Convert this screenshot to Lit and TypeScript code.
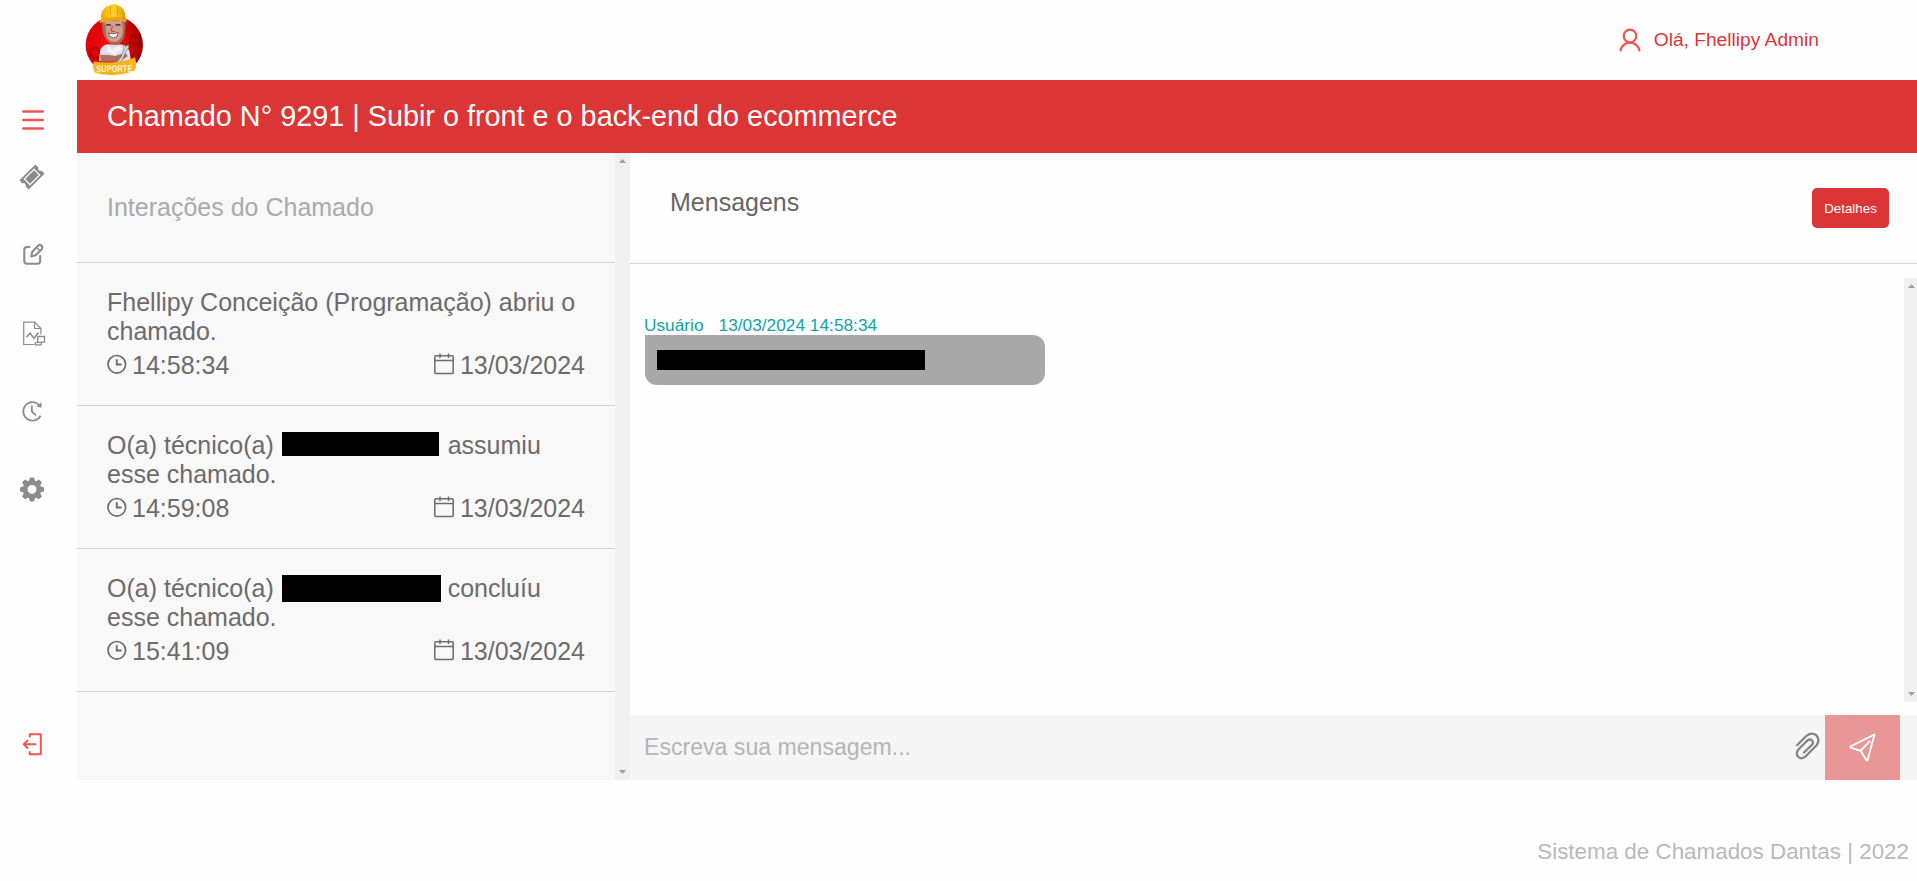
import { LitElement, html, css, svg, nothing } from "lit";
import { customElement, property } from "lit/decorators.js";

interface Interaction {
  first: string;
  hidden?: "a" | "b";
  after?: string;
  second: string;
  time: string;
  date: string;
}

const interactions: Interaction[] = [
  { first: "Fhellipy Conceição (Programação) abriu o", second: "chamado.", time: "14:58:34", date: "13/03/2024" },
  { first: "O(a) técnico(a)", hidden: "a", after: "assumiu", second: "esse chamado.", time: "14:59:08", date: "13/03/2024" },
  { first: "O(a) técnico(a)", hidden: "b", after: "concluíu", second: "esse chamado.", time: "15:41:09", date: "13/03/2024" },
];

const icons = {
  menu: svg`<path d="M29.3 28.5h19.500M29.300 37h19.500M29.300 45.500h19.500" stroke="#f2554f" stroke-width="2.500" stroke-linecap="round"/>`,
  ticket: svg`<g transform="translate(38 39) rotate(-45)" fill="#8c8c8c">
      <path fill-rule="evenodd" d="M-10.500-6.500H10.500q.8 0 .8.800V-2.200a2.300 2.300 0 0 0 0 4.400V5.700q0 .8-.8.800H-10.500q-.8 0-.8-.8V2.200a2.300 2.300 0 0 0 0-4.400V-5.700q0-.8.8-.8ZM-7.500-4.600V4.600H7.500V-4.600Z"/>
      <rect x="-6.200" y="-3.400" width="12.400" height="6.800"/></g>`,
  edit: svg`<g fill="none" stroke="#8c8c8c" stroke-width="2.100" stroke-linecap="round" stroke-linejoin="round">
      <path d="M29.500 31h-2.500q-2.700 0-2.700 2.700v11.300q0 2.700 2.700 2.700h10.500q2.700 0 2.700-2.700v-5"/>
      <path d="M31.300 40.500l.8-4.500 6-6.300q1.900-1.600 3.500 0t0 3.500l-6 6Z"/><path d="M37 32l3 2.800" stroke-width="1.500"/></g>`,
  report: svg`<g fill="none" stroke="#8c8c8c" stroke-width="1.200">
      <path d="M34.500 50.500h-10.800v-22.300h11l6.200 6.300v6M34.600 28.500v6h6"/>
      <path d="M26.500 43.200l3.500-4 4 5 4.500-5.700" stroke-width="1.500"/>
      <path d="M37.700 48.300v-5.800h6.800v5.600h-3l-.5 2.700h-5.500q-.8-2.500 1.200-2.500h4.800" stroke-width="1.300"/></g>`,
  history: svg`<g fill="none" stroke="#8c8c8c" stroke-width="1.800">
      <path d="M39 32.800a9.200 9.200 0 1 0 1.600 10.900"/><path d="M31.900 33.500v6.200l4 3.700"/></g>
      <path d="M41.500 30.300v5.500l-5-1.200Z" fill="#8c8c8c"/>`,
  logout: svg`<g fill="none" stroke="#f2554f" stroke-width="2" stroke-linecap="round" stroke-linejoin="round">
      <path d="M29.800 12.500v-2.300h11v20h-11v-2.200M35.500 20.300h-11.500M27.500 16.600l-3.700 3.700 3.700 3.700"/></g>`,
};

const gear = (() => {
  const cells = [];
  for (let i = 0; i < 8; i++) {
    cells.push(svg`<path d="M-3.200 -8L-2 -12H2L3.200 -8Z" transform=${`rotate(${i * 45})`}/>`);
  }
  return svg`<g transform="translate(32 39.400)" fill="#8c8c8c">${cells}
    <path fill-rule="evenodd" d="M0-9.200a9.200 9.200 0 1 1 0 18.400a9.200 9.200 0 1 1 0-18.400M0-4.500a4.500 4.500 0 1 0 0 9a4.500 4.500 0 1 0 0-9"/></g>`;
})();

@customElement("side-nav")
export class SideNav extends LitElement {
  static styles = css`
    :host { display: flex; flex-direction: column; width: 77px; height: 781px; box-sizing: border-box; padding-top: 83px; flex: none; }
    svg { display: block; flex: none; }
    .spacer { flex: 1; }
  `;
  render() {
    return html`
      <svg width="77" height="55" viewBox="6 0 77 55">${icons.menu}</svg>
      <svg width="77" height="78" viewBox="6 0 77 78">${icons.ticket}</svg>
      <svg width="77" height="78" viewBox="0 0 77 78">${icons.edit}</svg>
      <svg width="77" height="78" viewBox="0 0 77 78">${icons.report}</svg>
      <svg width="77" height="78" viewBox="0 0 77 78">${icons.history}</svg>
      <svg width="77" height="78" viewBox="0 0 77 78">${gear}</svg>
      <div class="spacer"></div>
      <svg width="77" height="57" viewBox="0 0 77 57">${icons.logout}</svg>
    `;
  }
}

@customElement("scroll-track")
export class ScrollTrack extends LitElement {
  static styles = css`
    :host { display: flex; flex-direction: column; justify-content: space-between; align-items: center; background: #f0f0f0; box-sizing: border-box; padding: 6px 0; flex: none; }
    .up, .down { width: 7px; height: 4px; background: #a0a0a0; }
    .up { clip-path: polygon(50% 0, 100% 100%, 0 100%); }
    .down { clip-path: polygon(0 0, 100% 0, 50% 100%); }
  `;
  render() {
    return html`<div class="up"></div><div class="down"></div>`;
  }
}

@customElement("support-logo")
export class SupportLogo extends LitElement {
  static styles = css`
    :host, svg { display: block; }
    .label { font: bold 9.500px "Liberation Sans", Arial, sans-serif; }
  `;
  render() {
    return html`<svg width="62" height="76" viewBox="83 0 62 76">
      <defs><radialGradient id="disc" cx=".35" cy=".45" r=".7">
        <stop offset="0" stop-color="#f30b0b"/><stop offset=".6" stop-color="#d40606"/><stop offset="1" stop-color="#8e0303"/>
      </radialGradient>
      <linearGradient id="hat"><stop offset="0" stop-color="#f0a80c"/><stop offset=".5" stop-color="#ffd22a"/><stop offset="1" stop-color="#d99a08"/></linearGradient></defs>
      <circle cx="114.300" cy="45" r="28.700" fill="url(#disc)"/>
      <circle cx="95" cy="53" r="5" fill="none" stroke="#b00505" stroke-width="3" stroke-dasharray="2.500 1.300"/>
      <circle cx="135" cy="40" r="5" fill="none" stroke="#9a0303" stroke-width="3" stroke-dasharray="2.500 1.300"/>
      <path d="M99 61l1-10q1-5 6-6.500h16q6 2 7.500 7l1.500 10Z" fill="#dfe0ec"/>
      <path d="M108 44l4 6 7-5 3 4-8 6-7-4Z" fill="#f4f4fb"/>
      <path d="M101.500 19h24q.5 9-.8 15.500-1.500 9-8.700 10.500-8.500-.5-11.700-8.200-2.300-5-2.800-17.800Z" fill="#a3695b"/>
      <path d="M104.500 21h17q2.500 8 .5 15-3 6-8 6t-7.500-6Z" fill="#d39c8b"/>
      <path d="M106 25.500q2.500-1.800 5 0M115.500 25.500q2.500-1.800 5 0" stroke="#3a2520" stroke-width="1.300" fill="none"/>
      <path d="M112.500 26l-1.500 5q2 1.200 4 0" stroke="#95594c" fill="none"/>
      <path d="M108 33q5.500 2 10.500-.5-1.500 5.500-5 5.500t-5.500-5Z" fill="#fff" stroke="#6a3a32" stroke-width=".8"/>
      <path d="M100 55q7-1 15 1l10-3 3 3-9 6-8-1-10 1Z" fill="#b07060"/>
      <path d="M117 62l4-5 3.500-9q-2-2-.5-3.500l2.200 2 1.800-2q2.300 3-1.300 5.500l-4 9-2.700 4Z" fill="#d5dadb" stroke="#53575a" stroke-width=".5"/>
      <path d="M101 20q-1-12 9-14.500 3-2.500 7-.5 8.500 2 8.800 14Q113 15.500 101 20Z" fill="url(#hat)"/>
      <path d="M99.700 20.500q13-6.500 26.800-1v2.500q-12.500-3.500-26.800 1Z" fill="#eda90f"/>
      <path d="M110.500 6v9M117.500 6v9" stroke="#e0a30b" stroke-width="1" fill="none"/>
      <path d="M94 61.500q20 3.500 41-4 2.500 8-.5 13Q116 78 95.500 73q-4-4.500-1.500-11.500Z" fill="#f5b320"/>
      <text class="label" x="96.300" y="71.900" textLength="36" lengthAdjust="spacingAndGlyphs" fill="#fff2cf" transform="rotate(-1 114 68)">SUPORTE</text>
    </svg>`;
  }
}

@customElement("interaction-card")
export class InteractionCard extends LitElement {
  @property({ attribute: false }) item!: Interaction;
  static styles = css`
    :host { display: flex; flex-direction: column; height: 143px; box-sizing: border-box; padding: 25px 30px 0; border-bottom: 1px solid #d2d3d3; color: #6d6b6b; font-size: 25px; line-height: 29px; }
    .line { display: flex; height: 29px; white-space: nowrap; }
    .bar { background: #000; flex: none; }
    .a { width: 157px; height: 24px; margin: 1px 9px 0 8px; }
    .b { width: 159px; height: 27px; margin: 1px 7px 0 8px; }
    .row { display: flex; justify-content: space-between; margin-top: 5px; }
    .cell { display: flex; gap: 5px; }
    .date { gap: 6px; }
    svg { display: block; }
  `;
  render() {
    const i = this.item;
    return html`
      <div class="line"><span>${i.first}</span>${i.hidden ? html`<span class="bar ${i.hidden}"></span><span>${i.after}</span>` : nothing}</div>
      <div class="line">${i.second}</div>
      <div class="row">
        <div class="cell">
          <svg width="20" height="24" viewBox="0 0 20 24" fill="none" stroke="#6d6b6b"><circle cx="9.800" cy="13.300" r="8.800" stroke-width="1.700"/><path d="M9.800 8.300v5.200h4.800" stroke-width="1.900"/></svg>
          <span>${i.time}</span>
        </div>
        <div class="cell date">
          <svg width="20" height="24" viewBox="0 0 20 24" fill="none" stroke="#6d6b6b" stroke-width="1.500"><rect x=".8" y="4.800" width="18.400" height="17.700" rx="1"/><path d="M1 9.500h18M6 2.500v4.500M14.500 2.500v4.500"/></svg>
          <span>${i.date}</span>
        </div>
      </div>
    `;
  }
}

@customElement("app-root")
export class AppRoot extends LitElement {
  static styles = css`
    :host { display: flex; flex-direction: column; height: 881px; overflow: hidden; background: #fefefe; font-family: "Liberation Sans", Arial, sans-serif; }
    .top { display: flex; height: 781px; flex: none; }
    .page { flex: 1; min-width: 0; display: flex; flex-direction: column; }
    header { height: 80px; display: flex; justify-content: space-between; padding: 0 98px 0 6px; flex: none; }
    .user { display: flex; align-items: center; gap: 13px; color: #dc3535; font-size: 19.200px; }
    .title { height: 73px; background: #dc3535; color: #fff; font-size: 28.800px; line-height: 72px; padding-left: 30px; flex: none; white-space: nowrap; }
    .body { display: flex; height: 627px; }
    aside { width: 538px; background: #f8f8f8; flex: none; }
    .aside-head { height: 110px; box-sizing: border-box; border-bottom: 1px solid #d2d3d3; padding: 40px 30px 0; font-size: 25px; line-height: 29px; color: #aaa; }
    .left-scroll { width: 15px; }
    main { flex: 1; min-width: 0; display: flex; flex-direction: column; }
    .chat-head { height: 111px; box-sizing: border-box; border-bottom: 1px solid #d2d5d3; display: flex; justify-content: space-between; align-items: flex-start; padding: 35px 28px 0 40px; color: #666; font-size: 25px; line-height: 29px; }
    .details { width: 77px; height: 40px; padding: 0; border: 0; border-radius: 5px; background: #dc3535; color: #fff; font: 13.333px "Liberation Sans", Arial, sans-serif; }
    .messages { display: flex; justify-content: space-between; height: 424px; margin-top: 14px; }
    .list { padding: 37px 15px; }
    .meta { display: flex; gap: 15px; color: #12a3a3; font-size: 17.300px; line-height: 20px; height: 20px; margin-left: -1px; }
    .bubble { width: 400px; height: 50px; box-sizing: border-box; padding: 15px 12px; background: #a9a9a9; border-radius: 0 12px 12px 12px; }
    .redacted { width: 268px; height: 20px; background: #000; }
    .right-scroll { width: 13px; padding-left: 2px; }
    .composer { height: 65px; margin-top: 13px; background: #f5f5f5; display: flex; align-items: center; padding: 0 17px 0 14px; }
    .placeholder { flex: 1; color: #b5b5b5; font-size: 23.100px; padding-bottom: 1px; }
    .send { width: 75px; height: 65px; display: grid; place-items: center; background: #e89696; }
    .clip { margin: 0 5px 3px 0; }
    svg { display: block; flex: none; }
    footer { margin-top: 58px; padding-right: 8px; text-align: right; color: #b9b9b9; font-size: 22.400px; line-height: 26px; }
  `;
  render() {
    return html`
      <div class="top">
        <side-nav></side-nav>
        <div class="page">
          <header>
            <support-logo></support-logo>
            <div class="user">
              <svg width="22" height="24" viewBox="0 0 22 24" fill="none" stroke="#f2554f" stroke-width="2.200" stroke-linecap="round"><circle cx="11" cy="8" r="6.300"/><path d="M1.600 22.300a9.500 9 0 0 1 18.800 0"/></svg>
              <span>Olá, Fhellipy Admin</span>
            </div>
          </header>
          <div class="title">Chamado N° 9291 | Subir o front e o back-end do ecommerce</div>
          <div class="body">
            <aside>
              <div class="aside-head">Interações do Chamado</div>
              ${interactions.map((i) => html`<interaction-card .item=${i}></interaction-card>`)}
            </aside>
            <scroll-track class="left-scroll"></scroll-track>
            <main>
              <div class="chat-head"><span>Mensagens</span><button class="details">Detalhes</button></div>
              <div class="messages">
                <div class="list">
                  <div class="meta"><span>Usuário</span><span>13/03/2024 14:58:34</span></div>
                  <div class="bubble"><div class="redacted"></div></div>
                </div>
                <scroll-track class="right-scroll"></scroll-track>
              </div>
              <div class="composer">
                <span class="placeholder">Escreva sua mensagem...</span>
                <svg class="clip" width="25" height="28" viewBox="0 0 25 28" fill="none" stroke="#858585" stroke-width="2.300" stroke-linecap="round"><path d="M2 13.300L11.500 3.800Q16.500-.2 21.300 3.200 25.500 8 21.600 13.200L10.500 24.500Q6.500 28 3.200 24.700.300 21.300 3.600 17.300L12.700 8.200Q15 6.700 17 8.300 18.800 10.400 17.200 12.500L9 20.500"/></svg>
                <div class="send"><svg width="27" height="29" viewBox="0 0 27 29" fill="none" stroke="#fff" stroke-width="1.900" stroke-linejoin="round" stroke-linecap="round"><path d="M25.500 1.500L1.500 13.300V14.500L11.500 17.800L17.500 27.300H18.500ZM11.500 17.800L20.500 8.500"/></svg></div>
              </div>
            </main>
          </div>
        </div>
      </div>
      <footer>Sistema de Chamados Dantas | 2022</footer>
    `;
  }
}
